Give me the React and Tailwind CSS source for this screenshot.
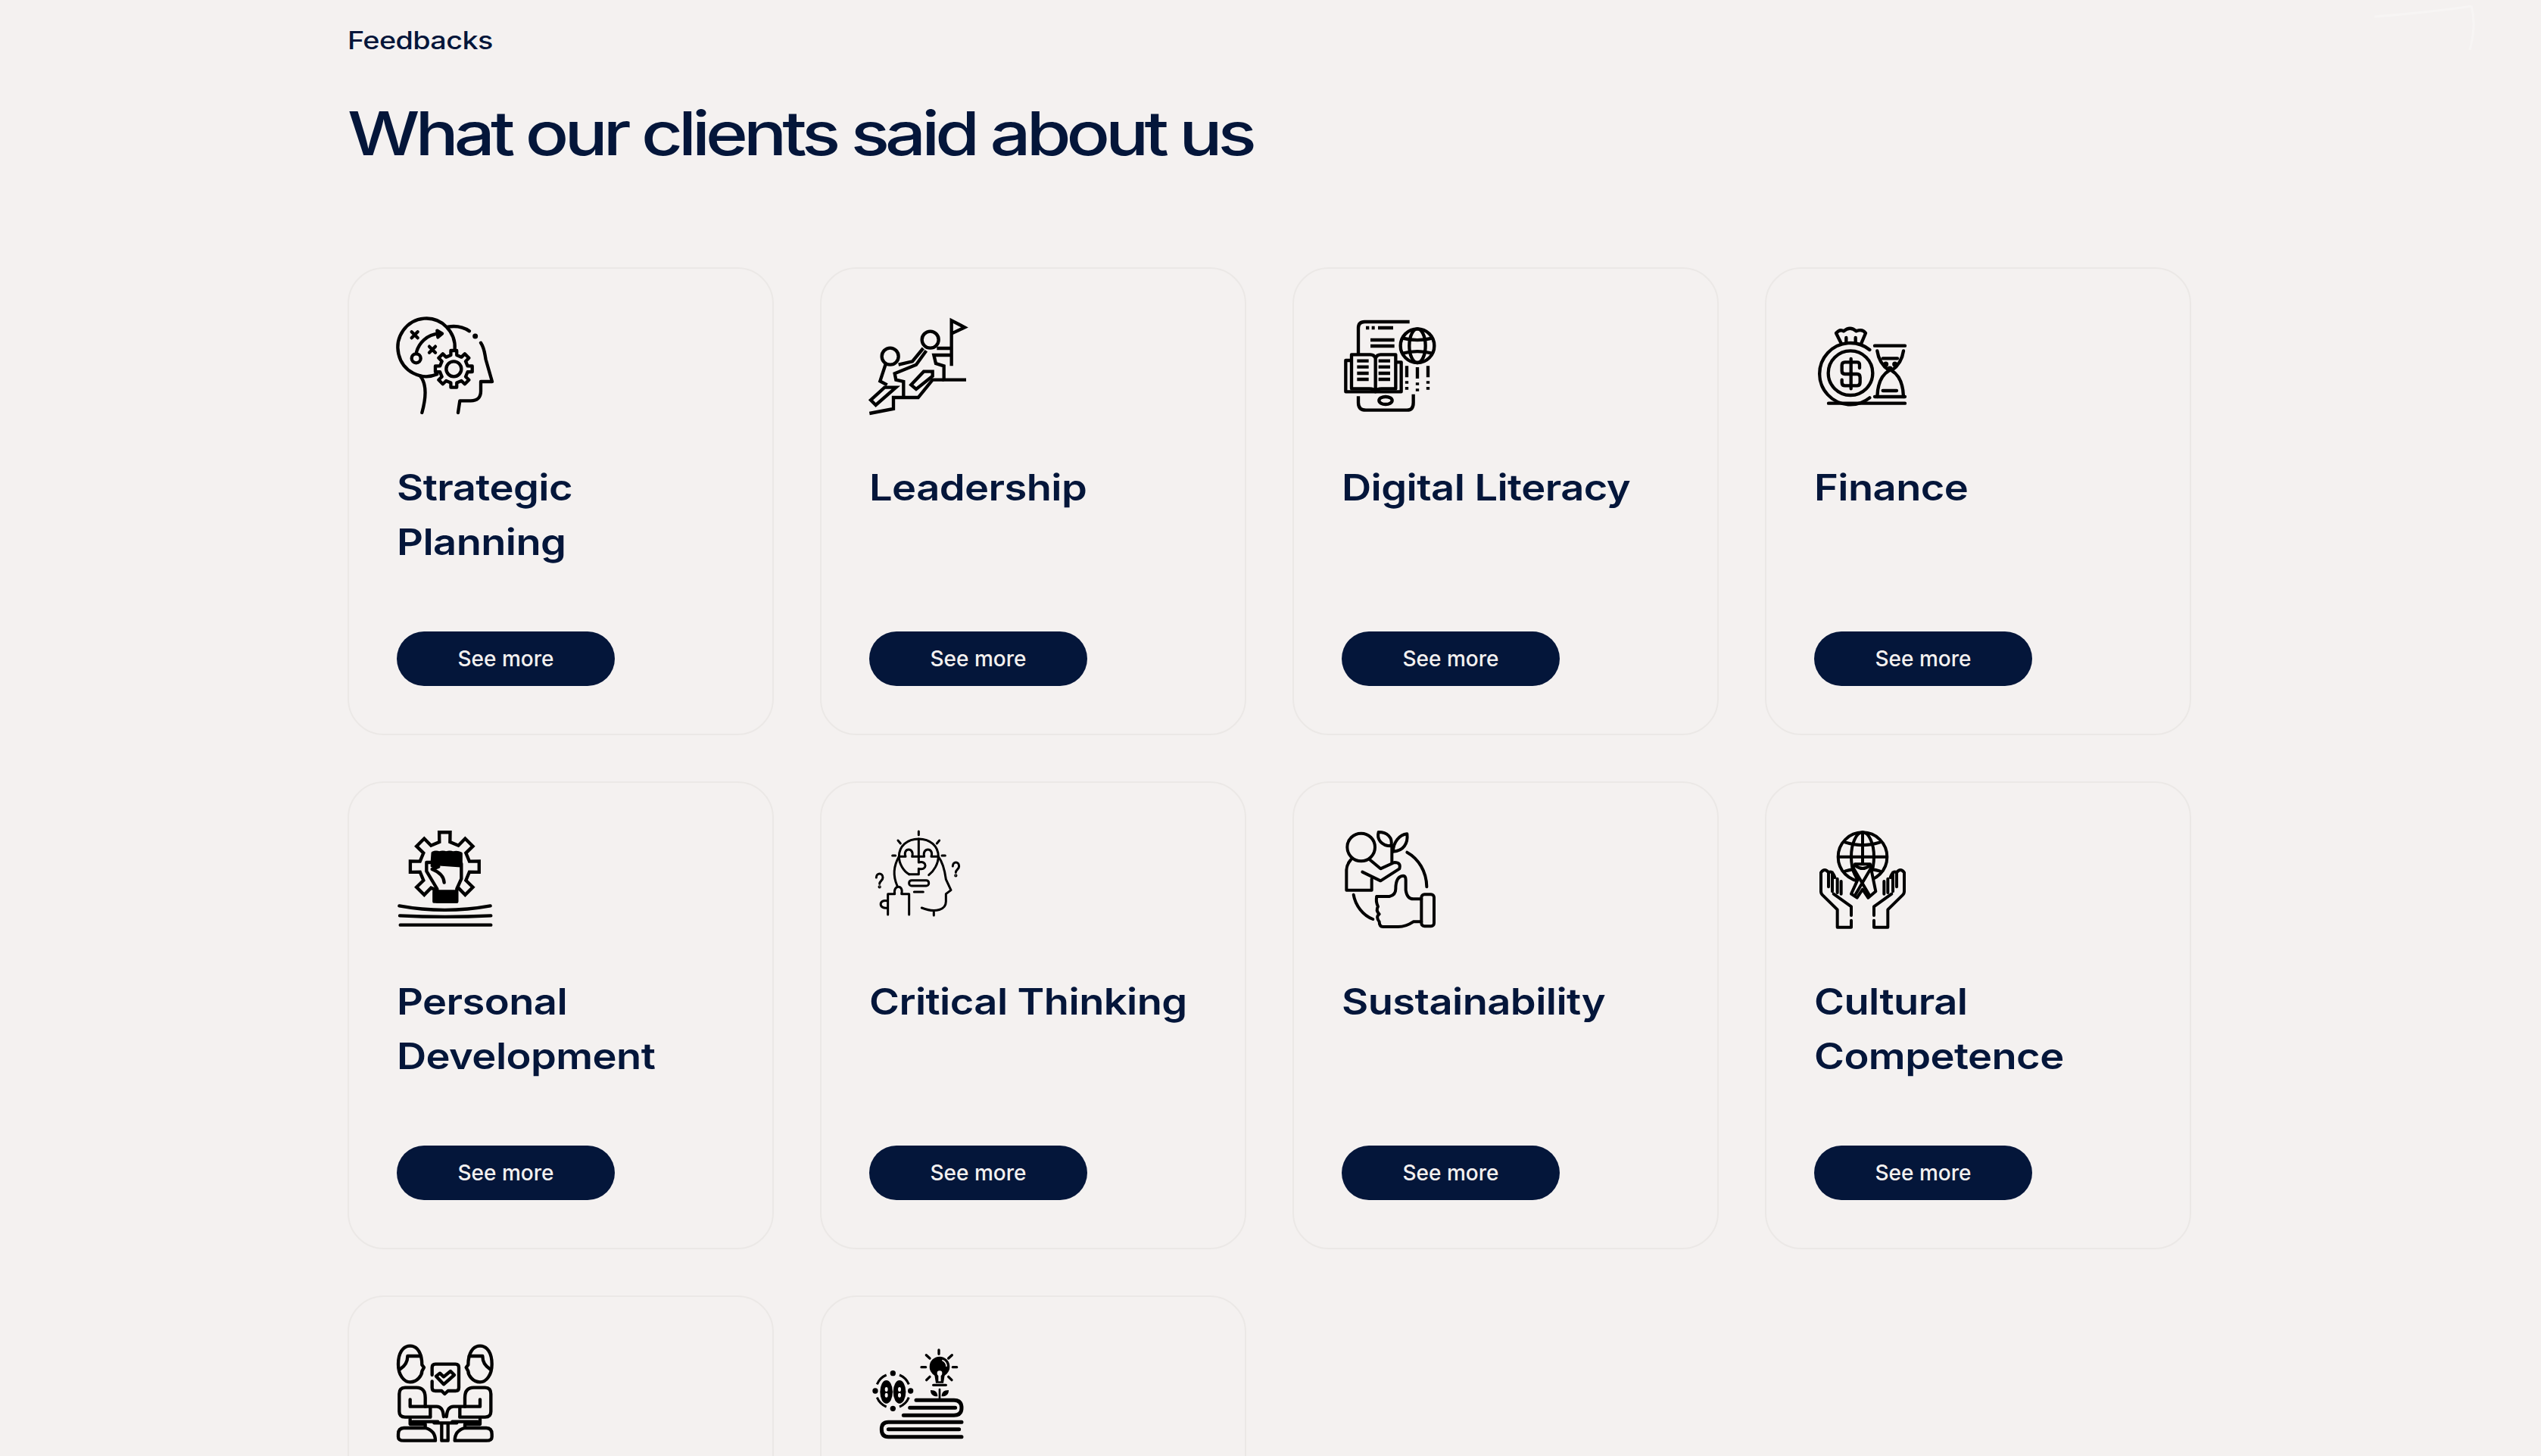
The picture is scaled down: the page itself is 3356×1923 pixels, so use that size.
const gear = (cx, cy, outer, inner, teeth = 8) => {
  const step = (Math.PI * 2) / teeth;
  const pts = [];
  for (let i = 0; i < teeth; i++) {
    const a = i * step - Math.PI / 2;
    const w = step * 0.2;
    pts.push([a - w * 1.35, inner], [a - w, outer], [a + w, outer], [a + w * 1.35, inner]);
  }
  return (
    pts
      .map(([a, r], i) => `${i ? "L" : "M"}${(cx + r * Math.cos(a)).toFixed(1)},${(cy + r * Math.sin(a)).toFixed(1)}`)
      .join(" ") + " Z"
  );
};

const Icon = ({ box, width = 13, children }) => (
  <svg
    viewBox={`${box} 384 384`}
    fill="none"
    stroke="#000"
    strokeWidth={width}
    strokeLinecap="round"
    strokeLinejoin="round"
    className="w-[128px] h-[128px] overflow-visible"
  >
    {children}
  </svg>
);

const StrategyIcon = () => (
  <Icon box="72 54">
    <path d="M302,185 A113,115 0 1,0 232,283" />
    <path d="M150,195 C160,160 190,125 240,122" />
    <path d="M232,110 L252,122 L235,136 Z" fill="#000" />
    <circle cx="149" cy="220" r="18" />
    <path d="M131,115 L155,139 M155,115 L131,139 M201,173 L225,197 M225,173 L201,197" strokeWidth="13" />
    <path d="M275,95 C305,90 335,95 360,112" />
    <circle cx="383" cy="132" r="4" fill="#000" />
    <path d="M405,158 C420,180 420,200 425,225 L450,312 L405,312 L405,350 C405,375 390,388 365,388 L322,388 L315,435" />
    <path d="M165,290 C190,320 190,370 172,435" />
    <path d={gear(298, 262, 74, 56, 8)} fill="#f4f1f0" />
    <circle cx="298" cy="262" r="30" />
  </Icon>
);

const LeadershipIcon = () => (
  <Icon box="54 54">
    <g strokeLinecap="butt" strokeLinejoin="miter">
      <circle cx="296" cy="146" r="33" />
      <circle cx="137" cy="212" r="33" />
      <path d="M380,250 V70 L432,97 L380,122" />
      <path d="M322,180 H380 M378,207 H310 L318,240 L350,250 V305 H438" />
      <path d="M350,305 H305 L248,375 H150 V420 L55,438" />
      <path d="M268,180 L225,232 L170,245 M120,240 L97,310 L125,325 M280,190 L240,245 L155,280 L160,305 L190,312 V372" />
      <path d="M220,325 L270,272 H305 V290 L240,342 Z" />
      <path d="M60,385 L115,335 H160 L80,405 Z" />
    </g>
  </Icon>
);

const DigitalIcon = () => (
  <Icon box="36 54">
    <g strokeLinecap="butt">
      <path d="M102,205 V100 Q102,75 127,75 H305 M102,370 V395 Q102,425 132,425 H295 Q320,425 320,395 V362" />
      <path d="M132,99 H145 M155,99 H167 M180,99 H240 M150,147 H245 M150,171 H245" />
      <path d="M75,228 H52 V352 H272 V235 H250" />
      <path d="M75,205 V340 H145 Q165,340 170,352 Q175,340 195,340 H250 V205 H190 Q175,205 170,220 Q165,205 150,205 Z M170,220 V345" />
      <path d="M97,230 H143 M97,254 H143 M97,279 H143 M97,303 H143 M182,230 H228 M182,254 H228 M182,279 H228 M182,303 H228" />
      <circle cx="336" cy="170" r="67" />
      <ellipse cx="336" cy="170" rx="32" ry="67" />
      <path d="M278,140 Q336,155 394,140 M278,200 Q336,185 394,200" />
      <path d="M294,250 V295 M336,255 V300 M378,250 V295 M294,310 V320 M294,333 V344 M336,316 V326 M336,340 V350 M378,310 V320 M378,333 V344" />
      <ellipse cx="210" cy="387" rx="26" ry="15" />
    </g>
  </Icon>
);

const FinanceIcon = () => (
  <Icon box="48 54">
    <path d="M268,186 A122,122 0 1,0 268,376" />
    <circle cx="192" cy="278" r="88" />
    <path d="M228,258 V245 Q228,235 218,235 H170 Q158,235 158,247 V270 Q158,282 170,282 H218 Q230,282 230,295 V315 Q230,328 218,328 H170 Q158,328 158,316 V305 M194,222 V340" />
    <path d="M155,160 L135,120 Q150,102 165,112 Q190,90 215,112 Q240,102 252,120 L235,160 M175,155 V138 M212,155 V138" />
    <path d="M288,170 H408 M288,372 H408 M105,398 H408" />
    <path d="M298,190 Q305,240 345,268 Q300,295 298,372 M402,190 Q395,240 355,268 Q400,295 402,372" />
    <path d="M320,220 H378 M320,348 H375" />
    <circle cx="332" cy="243" r="4" fill="#000" />
    <circle cx="368" cy="243" r="4" fill="#000" />
    <circle cx="348" cy="262" r="5" fill="#000" />
  </Icon>
);

const DevelopmentIcon = () => (
  <Icon box="72 39">
    <path d={gear(262, 182, 138, 100, 8)} strokeLinejoin="miter" />
    <path d="M212,165 H190 V200 L232,270 V320 H310 V270 L328,230 V170 Z" fill="#f4f1f0" />
    <path d="M215,128 Q228,122 240,128 Q255,122 268,128 Q282,122 295,128 Q310,122 326,130 V178 L240,172 L212,170 Z" fill="#000" />
    <rect x="220" y="280" width="88" height="40" fill="#000" />
    <path d="M212,178 L238,182 L212,192 C222,196 258,210 260,245" />
    <path d="M82,337 Q262,370 443,337 M84,376 Q262,385 445,376 M86,413 H445" />
  </Icon>
);

const CriticalIcon = () => (
  <Icon box="54 39" width={9}>
    <path d="M212,212 C190,200 172,170 172,142 C172,100 205,72 250,72 C295,72 328,100 328,142 C328,170 310,200 290,215" />
    <path d="M172,142 H198 C185,105 235,105 224,142 H272 C262,105 312,105 300,142 H328" />
    <path d="M250,72 V165 C285,155 285,200 250,190 V212 H212" />
    <rect x="212" y="236" width="78" height="22" rx="10" />
    <path d="M232,282 H268 M250,42 V56 M168,78 L178,90 M332,78 L322,90 M146,138 H158 M342,138 H355" />
    <path d="M172,142 C150,180 148,220 165,258 M328,142 C350,170 355,210 358,232 L378,275 L358,290 V320 C358,350 320,368 262,345 M310,360 V375" />
    <path d="M128,372 V290 H155 C148,252 192,252 182,290 H212 V372 M128,318 C90,308 90,352 128,345" />
    <path d="M82,225 C82,205 108,205 108,225 C108,238 95,238 95,250 M385,180 C385,160 410,160 410,180 C410,193 397,193 397,205" />
    <circle cx="95" cy="262" r="2" fill="#000" />
    <circle cx="397" cy="217" r="2" fill="#000" />
  </Icon>
);

const SustainIcon = () => (
  <Icon box="36 39" width={12}>
    <circle cx="113" cy="105" r="55" />
    <path d="M72,155 Q55,175 55,195 V275 H155 V230" />
    <path d="M145,152 L190,190 L245,165 Q272,165 265,190 L190,238 L118,203" />
    <path d="M235,165 V100" />
    <path d="M232,100 C190,100 175,70 182,45 C215,45 240,65 232,100 Z M240,122 C240,85 265,55 295,52 C300,90 280,120 240,122 Z" />
    <path d="M295,125 C340,150 372,200 373,262 M83,293 C90,335 120,375 160,390" />
    <path d="M175,300 H225 Q250,295 250,270 Q250,220 280,218 Q290,218 290,235 V275 Q295,310 320,310 H352" />
    <rect x="352" y="292" width="50" height="126" rx="12" />
    <path d="M352,400 H320 Q290,420 260,420 H200 Q185,420 185,400 Q170,380 185,370 Q170,355 180,340 Q170,320 175,300" />
  </Icon>
);

const CultureHand = () => (
  <path d="M140,422 H195 V395 M195,375 V340 L125,290 M140,422 V352 L82,295 Q75,290 75,280 V205 Q90,185 105,205 V262 M120,205 V280 M140,230 V285 M155,240 V290 M105,205 Q120,195 130,225" />
);

const CultureIcon = () => (
  <Icon box="48 39" width={12}>
    <circle cx="240" cy="143" r="97" />
    <ellipse cx="240" cy="143" rx="45" ry="97" />
    <path d="M240,46 V240 M145,143 H335 M170,85 Q240,108 310,85 M170,200 Q240,178 310,200" />
    <path d="M210,172 H270 L292,280 L262,305 L240,272 L218,305 L195,290 L220,235 L200,190 Z" fill="#f4f1f0" />
    <path d="M212,178 Q240,200 268,178 M205,190 L265,292 M272,190 L212,292" />
    <CultureHand />
    <g transform="translate(480 0) scale(-1 1)">
      <CultureHand />
    </g>
  </Icon>
);

const TeamPerson = () => (
  <g>
    <path d="M125,50 C95,50 78,80 78,122 C78,165 100,193 125,193 C155,193 172,165 172,150 L180,135 L172,125 C172,80 155,50 125,50 Z" />
    <path d="M85,142 C112,125 115,105 115,90 H168" />
    <path d="M82,240 Q82,215 105,215 H150 Q185,215 185,255 V290 M82,240 V310 Q82,332 105,332 H205" />
    <path d="M125,262 V290 H230 Q255,290 258,330 M205,290 V330" />
    <path d="M125,340 V360 H185 V375 H100 Q78,375 78,400 V410 Q78,425 100,425 H225 Q225,385 185,375 M135,350 H235" />
  </g>
);

const TeamIcon = () => (
  <Icon box="72 45">
    <TeamPerson />
    <g transform="translate(527 0) scale(-1 1)">
      <TeamPerson />
    </g>
    <path d="M212,165 V135 Q212,122 225,122 H305 Q318,122 318,135 V215 Q318,228 305,228 H275 L262,240 L250,228 H225 Q212,228 212,215 V190" />
    <path d="M228,170 L243,158 L258,172 L285,150 L300,165 L258,202 Z" />
    <path d="M220,355 H310 M250,355 V425 H275 V355" />
  </Icon>
);

const BooksIcon = () => (
  <Icon box="54 45" width={15}>
    <path d="M240,265 H390 Q420,265 420,295 Q420,325 390,325 H190 M215,295 H395" />
    <path d="M420,352 H130 Q103,352 103,380 Q103,410 130,410 H420 M130,380 H410" />
    <circle cx="148" cy="158" r="11" fill="#000" stroke="none" />
    <circle cx="78" cy="228" r="11" fill="#000" stroke="none" />
    <circle cx="218" cy="228" r="11" fill="#000" stroke="none" />
    <circle cx="148" cy="298" r="11" fill="#000" stroke="none" />
    <path d="M122,165 A68,68 0 0,0 85,202 M174,165 A68,68 0 0,1 211,202 M85,254 A68,68 0 0,0 122,291 M211,254 A68,68 0 0,1 174,291" strokeWidth="9" strokeLinecap="butt" />
    <ellipse cx="122" cy="232" rx="25" ry="46" fill="#000" stroke="none" />
    <ellipse cx="174" cy="232" rx="25" ry="46" fill="#000" stroke="none" />
    <ellipse cx="122" cy="222" rx="6" ry="9" fill="#f4f1f0" stroke="none" />
    <ellipse cx="122" cy="245" rx="6" ry="9" fill="#f4f1f0" stroke="none" />
    <ellipse cx="174" cy="222" rx="6" ry="9" fill="#f4f1f0" stroke="none" />
    <ellipse cx="174" cy="245" rx="6" ry="9" fill="#f4f1f0" stroke="none" />
    <circle cx="333" cy="132" r="40" fill="#000" stroke="none" />
    <path d="M312,160 L318,197 H348 L354,160 Z" fill="#000" stroke="none" />
    <path d="M345,107 Q360,115 360,130" stroke="#f4f1f0" strokeWidth="5" />
    <circle cx="333" cy="158" r="10" fill="#f4f1f0" stroke="none" />
    <rect x="328" y="160" width="10" height="30" fill="#f4f1f0" stroke="none" />
    <path d="M308,205 H358" strokeWidth="10" />
    <path d="M330,66 V82 M280,86 L294,99 M382,86 L368,99 M261,134 H278 M385,134 H401 M281,185 L294,172 M381,185 L368,172" strokeWidth="10" />
    <path d="M333,222 V258" strokeWidth="8" />
    <path d="M325,250 C302,250 297,238 297,225 C318,225 325,235 325,250 Z M341,250 C364,250 369,238 369,225 C348,225 341,235 341,250 Z" fill="#000" stroke="none" />
  </Icon>
);

const topics = [
  { title: "Strategic Planning", Art: StrategyIcon },
  { title: "Leadership", Art: LeadershipIcon },
  { title: "Digital Literacy", Art: DigitalIcon },
  { title: "Finance", Art: FinanceIcon },
  { title: "Personal Development", Art: DevelopmentIcon },
  { title: "Critical Thinking", Art: CriticalIcon },
  { title: "Sustainability", Art: SustainIcon },
  { title: "Cultural Competence", Art: CultureIcon },
  { title: "", Art: TeamIcon },
  { title: "", Art: BooksIcon },
];

const Card = ({ title, Art }) => (
  <div className="h-[618px] border-2 border-[#ebe8e6] rounded-[48px] pt-[63px] px-[63px] flex flex-col">
    <Art />
    <h3 className="mt-[62px] h-[144px] w-[383px] origin-left scale-x-[1.13] text-[48px] leading-[72px] font-semibold tracking-[-0.5px] text-[#04163a]">
      {title}
    </h3>
    {title && (
      <button className="mt-[82px] w-[288px] h-[72px] rounded-full bg-[#04163a] text-[#f4f1f0] text-[28px] font-medium">
        See more
      </button>
    )}
  </div>
);

export default function App() {
  return (
    <div
      className="relative h-[1923px] overflow-hidden bg-[#f4f1f0] pl-[459px] pt-[32px]"
      style={{ fontFamily: "Inter, sans-serif" }}
    >
      <p className="origin-left scale-x-[1.18] text-[32px] leading-[44px] font-medium tracking-[-0.5px] text-[#04163a]">
        Feedbacks
      </p>
      <h1 className="mt-[52px] origin-left scale-x-[1.19] text-[80px] leading-[96px] font-medium tracking-[-5px] text-[#04163a]">
        What our clients said about us
      </h1>
      <div className="mt-[129px] grid grid-cols-[repeat(4,563px)] gap-x-[61px] gap-y-[61px]">
        {topics.map((topic, i) => (
          <Card key={i} {...topic} />
        ))}
      </div>
      <svg className="absolute top-0 right-0 w-[220px] h-[70px]" viewBox="0 0 220 70" fill="none" stroke="#f7f5f4" strokeWidth="3">
        <path d="M0,22 C50,18 90,14 128,8 M128,8 C134,30 130,50 126,66" />
      </svg>
    </div>
  );
}
